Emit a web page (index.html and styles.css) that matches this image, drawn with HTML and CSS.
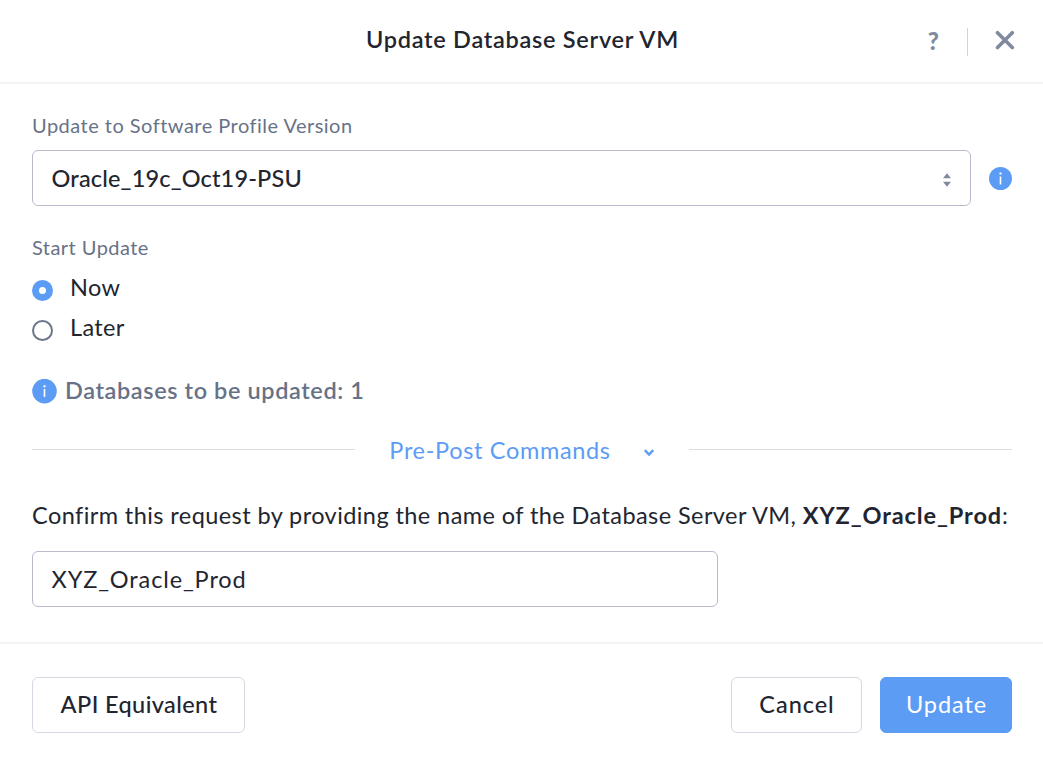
FILE: index.html
```html
<!DOCTYPE html>
<html lang="en">
<head>
<meta charset="utf-8">
<title>Update Database Server VM</title>
<link rel="stylesheet" href="styles.css">
</head>
<body>
<div class="modal">
  <header class="header">
    <h1 class="title">Update Database Server VM</h1>
    <div class="header-actions">
      <span class="help">?</span>
      <span class="separator"></span>
      <svg class="close" width="20" height="20" viewBox="0 0 20 20"><path d="M2.5 2.7 17.3 17.5M17.3 2.7 2.5 17.5"/></svg>
    </div>
  </header>
  <main class="body">
    <div class="label version-label">Update to Software Profile Version</div>
    <div class="select-row">
      <div class="field select">
        <span class="select-text">Oracle_19c_Oct19-PSU</span>
        <svg class="sorter" width="8" height="14" viewBox="0 0 8 14"><path d="M4 .2 8 5.2H0zM4 13.8 8 8.8H0z"/></svg>
      </div>
      <svg class="info" width="23" height="24" viewBox="0 0 23 24"><circle cx="11.5" cy="12.5" r="11.5"/><path d="M11.5 10.5v8"/><rect x="10.5" y="6.5" width="2" height="2"/></svg>
    </div>
    <div class="label start-label">Start Update</div>
    <div class="radios">
      <div class="radio"><span class="dot checked"></span><span class="radio-text">Now</span></div>
      <div class="radio"><span class="dot"></span><span class="radio-text">Later</span></div>
    </div>
    <div class="notice">
      <svg class="info" width="25" height="25" viewBox="0 0 24 24"><circle cx="12" cy="11.6" r="11.8"/><path d="M12 9.6v7.6"/><rect x="11" y="6" width="2" height="2"/></svg>
      <span>Databases to be updated: 1</span>
    </div>
    <div class="divider">
      <span class="rule"></span>
      <span class="divider-text">Pre-Post Commands</span>
      <svg class="chevron" width="12" height="10" viewBox="0 0 12 10"><path d="M1.8 2.2 6 6.6 10.2 2.2"/></svg>
      <span class="rule"></span>
    </div>
    <p class="confirm">Confirm this request by providing the name of the Database Server VM, <b class="vm-name">XYZ_Oracle_Prod</b>:</p>
    <div class="field name-input">XYZ_Oracle_Prod</div>
  </main>
  <footer class="footer">
    <div class="button api">API Equivalent</div>
    <div class="button cancel">Cancel</div>
    <div class="button primary">Update</div>
  </footer>
</div>
</body>
</html>
```

FILE: styles.css
```css
* { box-sizing: border-box; }

body {
  margin: 0;
  background: #fff;
  color: #22252f;
  font: 400 23.5px/30px Lato, sans-serif;
}

.modal {
  display: flex;
  flex-direction: column;
  height: 765px;
}

.header {
  display: grid;
  grid-template-columns: 1fr auto 1fr;
  height: 84px;
  padding: 24px 28px 0 32px;
  border-bottom: 2px solid #f2f3f4;
}

.title {
  grid-column: 2;
  margin: 0 0 0 -2px;
  font-size: 23.5px;
  font-weight: 600;
  line-height: 30px;
  letter-spacing: 0.72px;
}

.header-actions {
  display: flex;
  justify-content: flex-end;
  align-items: flex-start;
  color: #7f8a9f;
}

.help {
  margin-top: 2px;
  font-size: 24px;
  font-weight: 900;
}

.separator {
  width: 1px;
  height: 28px;
  margin: 4px 27px 0 28px;
  background: #d0d3da;
}

.close {
  margin-top: 6px;
  fill: none;
  stroke: #7f8a9f;
  stroke-width: 3.6;
  stroke-linecap: round;
}

.body {
  display: flex;
  flex-direction: column;
  height: 558px;
  padding: 29px 31px 0 32px;
}

.label {
  color: #687287;
  font-size: 20px;
  line-height: 24px;
}

.version-label { letter-spacing: 0.48px; }

.start-label {
  margin-top: 29px;
  letter-spacing: 0.45px;
}

.field {
  display: flex;
  align-items: center;
  height: 56px;
  padding: 0 19px 0 18.5px;
  border: 1px solid #b8bbcc;
  border-radius: 6px;
}

.select-row {
  display: flex;
  align-items: center;
  gap: 18px;
  margin-top: 13px;
}

.select {
  flex: 1;
  justify-content: space-between;
  font-weight: 500;
  letter-spacing: 0.17px;
}

.sorter {
  margin-top: 4px;
  fill: #7f8a9f;
}

.info {
  flex: none;
  fill: #5c9cf5;
}

.info path {
  stroke: #fff;
  stroke-width: 1.6;
}

.info rect { fill: #fff; }

.radios {
  display: flex;
  flex-direction: column;
  gap: 10px;
  margin-top: 13px;
}

.radio {
  display: flex;
  align-items: flex-start;
  gap: 17px;
  letter-spacing: 0.35px;
}

.dot {
  width: 21px;
  height: 21px;
  margin-top: 8px;
  border: 2px solid #6b768b;
  border-radius: 50%;
}

.checked { border: 7px solid #5c9cf5; }

.notice {
  display: flex;
  align-items: center;
  gap: 8px;
  margin-top: 33px;
  color: #687287;
  font-weight: 600;
  letter-spacing: 0.6px;
}

.notice .info { margin-top: 2px; }

.divider {
  display: flex;
  align-items: center;
  margin-top: 30px;
  color: #5c9cf5;
}

.rule {
  flex: 1;
  height: 1px;
  margin-top: -1px;
  background: #dcdddf;
}

.divider-text {
  margin-left: 34px;
  letter-spacing: 0.66px;
}

.chevron {
  margin: 6px 34px 0 32px;
  fill: none;
  stroke: #5c9cf5;
  stroke-width: 2.4;
}

.confirm {
  margin: 35px 0 0;
  letter-spacing: 0.42px;
  white-space: nowrap;
}

.vm-name {
  font-weight: 700;
  letter-spacing: 0.9px;
}

.name-input {
  width: 686px;
  margin-top: 21px;
  letter-spacing: 0.88px;
}

.footer {
  display: flex;
  gap: 18px;
  height: 123px;
  padding: 33px 31px 0 32px;
  border-top: 2px solid #f2f3f4;
}

.button {
  display: flex;
  align-items: center;
  justify-content: center;
  height: 56px;
  padding-bottom: 2px;
  padding-left: 1px;
  border: 1px solid #d6d8e2;
  border-radius: 6px;
}

.api {
  width: 213px;
  margin-right: auto;
  font-weight: 500;
  letter-spacing: 0.4px;
}

.cancel {
  width: 131px;
  font-weight: 500;
  letter-spacing: 0.95px;
}

.primary {
  width: 132px;
  border-color: #5c9cf5;
  background: #5c9cf5;
  color: #fff;
  letter-spacing: 0.9px;
}
```
